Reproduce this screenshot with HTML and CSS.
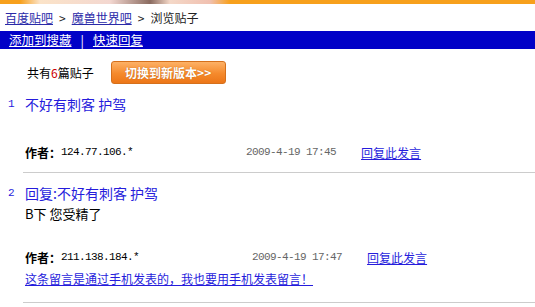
FILE: index.html
```html
<!DOCTYPE html>
<html lang="zh-CN">
<head>
  <meta charset="UTF-8">
  <title>浏览贴子</title>
  <link rel="stylesheet" href="styles.css">
</head>
<body>
  <div class="banner">
    <div class="banner-art"></div>
  </div>

  <div class="crumbs">
    <a href="#">百度贴吧</a><span class="gt">&gt;</span><a href="#">魔兽世界吧</a><span class="gt">&gt;</span>浏览贴子
  </div>

  <div class="toolbar">
    <a href="#">添加到搜藏</a><span class="sep">|</span><a href="#">快速回复</a>
  </div>

  <div class="summary">
    <span class="count">共有<em>6</em>篇贴子</span>
    <a href="#" class="switch-btn">切换到新版本&gt;&gt;</a>
  </div>

  <div class="post">
    <div class="post-title"><span class="num">1</span><span class="title">不好有刺客 护驾</span></div>
    <div class="post-body"></div>
    <div class="post-meta">
      <b>作者：</b><span class="ip">124.77.106.*</span>
      <span class="date">2009-4-19 17:45</span>
      <a href="#" class="reply">回复此发言</a>
    </div>
  </div>
  <div class="divider"></div>

  <div class="post">
    <div class="post-title"><span class="num">2</span><span class="title">回复:不好有刺客 护驾</span></div>
    <div class="post-body tall">B下 您受精了</div>
    <div class="post-meta">
      <b>作者：</b><span class="ip">211.138.184.*</span>
      <span class="date">2009-4-19 17:47</span>
      <a href="#" class="reply">回复此发言</a>
    </div>
    <div class="mobile"><a href="#">这条留言是通过手机发表的，我也要用手机发表留言！</a></div>
  </div>
  <div class="divider"></div>
</body>
</html>
```

FILE: styles.css
```css
body {
  margin: 0;
  font-family: "Noto Sans CJK SC", "Noto Sans", sans-serif;
  font-size: 12px;
  color: #000;
  background: #fff;
}

a {
  color: #261cdc;
}

.banner {
  height: 4px;
  background: #f7a01c;
}

.banner-art {
  width: 230px;
  height: 4px;
  background: linear-gradient(90deg, #f7a01c 0, #f7a01c 20px, #fbe3c8 40px, #f3d7d0 110px, #8a6b60 150px, #f4d8c8 170px, #f0c0b0 210px, #f7a01c 230px);
}

.crumbs {
  height: 27px;
  line-height: 27px;
  padding-left: 5px;
  color: #222;
}

.crumbs a {
  color: #2a2aa8;
}

.crumbs .gt {
  margin: 0 6px;
}

.toolbar {
  height: 18px;
  line-height: 17px;
  background: #0101c7;
  padding-left: 9px;
  color: #fff;
  font-size: 12.5px;
}

.toolbar a {
  color: #fff;
}

.toolbar .sep {
  margin: 0 9px;
}

.summary {
  display: flex;
  align-items: center;
  padding: 12px 0 0 27px;
}

.count em {
  font-style: normal;
  color: #c00;
}

.switch-btn {
  margin-left: 17px;
  width: 115px;
  height: 23px;
  line-height: 22px;
  box-sizing: border-box;
  text-align: center;
  border: 1px solid #d5701c;
  border-radius: 3px;
  background: linear-gradient(#fdb166, #f58a2c 55%, #ec7618);
  color: #fff;
  font-weight: bold;
  text-decoration: none;
  text-shadow: 0 0 1px #b55a10;
}

.post {
  padding: 10px 0;
}

.post-title {
  display: flex;
  align-items: center;
  height: 20px;
}

.num {
  width: 25px;
  padding-left: 8px;
  box-sizing: border-box;
  color: #261cdc;
  font-family: "Liberation Mono", monospace;
  font-size: 11px;
}

.title {
  color: #261cdc;
  font-size: 14px;
}

.post-body {
  padding-left: 25px;
  min-height: 28px;
  line-height: 21px;
  font-size: 13px;
}

.post-body.tall {
  min-height: 44px;
}

.post-meta {
  display: flex;
  align-items: center;
  height: 20px;
  padding-left: 25px;
}

.ip, .date {
  font-family: "Liberation Mono", monospace;
  font-size: 11px;
  letter-spacing: -0.6px;
}

.date {
  margin-left: 113px;
  color: #666;
}

.reply {
  margin-left: 25px;
}

.mobile {
  padding: 2px 0 3px 25px;
  line-height: 20px;
}

.divider {
  margin-left: 23px;
  border-top: 1px solid #ccc;
}
```
